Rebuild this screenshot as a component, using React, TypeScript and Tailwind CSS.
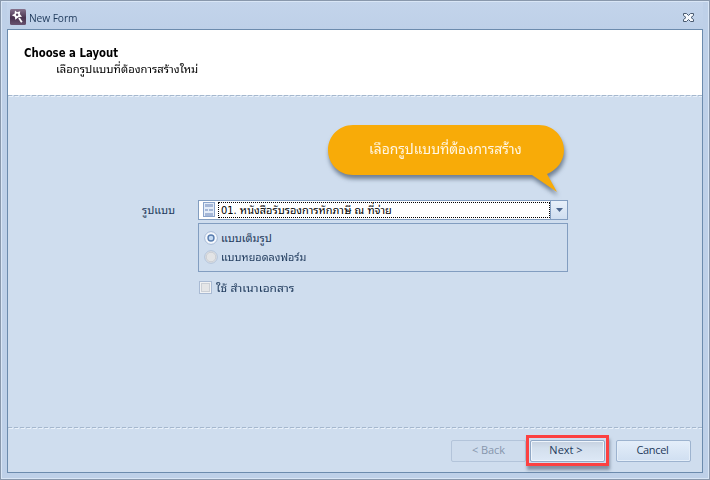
import type { ReactNode } from 'react';

function Label({ children, className = '' }: { children: ReactNode; className?: string }) {
  return <span className={`block w-max origin-left whitespace-nowrap ${className}`}>{children}</span>;
}

function Divider() {
  return (
    <div className="h-[2px] shrink-0">
      <div className="h-px bg-[repeating-linear-gradient(90deg,#a5b7cd_0_4px,#cfddee_4px_6px)]" />
      <div className="h-px bg-[repeating-linear-gradient(90deg,#cfddee_0_1px,#e9f1fa_1px_5px,#cfddee_5px_6px)]" />
    </div>
  );
}

function Radio({ checked = false }: { checked?: boolean }) {
  return (
    <svg width="14" height="14" viewBox="0 0 14 14" className="-mt-[2px] shrink-0 overflow-visible">
      <circle cx="7" cy="7" r="6.3" fill={checked ? '#f8fbff' : '#e3e4e6'} stroke={checked ? '#a5b9d6' : '#b2c3db'} />
      <circle cx="7" cy="7" r="4.8" fill="none" stroke={checked ? '#f4f8fd' : '#c9cdd3'} />
      {checked && <circle cx="7" cy="7" r="3" fill="#c4daf3" stroke="#587cae" strokeWidth="1.4" />}
    </svg>
  );
}

export default function App() {
  return (
    <div className="flex h-[480px] w-[710px] flex-col overflow-hidden border border-[#8998ac] bg-[#bed0e8] font-['Tahoma','DejaVu_Sans_Condensed','Noto_Sans_Thai_Looped','Loma','Waree','Noto_Sans_Thai',sans-serif] text-[11px] text-[#1e395b]">
      <div className="flex flex-1 flex-col border border-[#d9e6f6] px-[5px] pb-[5px]">
        <div className="flex h-[27px] shrink-0 items-center bg-gradient-to-b from-[#c3d4eb] to-[#bed0e8]">
          <svg width="16" height="16" viewBox="0 0 16 16" className="ml-[3px] mt-[3px]">
            <defs>
              <linearGradient id="wand" x2="0" y2="1"><stop stopColor="#86728c" /><stop offset=".55" stopColor="#49334f" /><stop offset="1" stopColor="#695270" /></linearGradient>
            </defs>
            <rect width="16" height="16" rx="1.5" fill="url(#wand)" />
            <path d="M5 1.5 7 3.2 10.2 2.2 9.8 5 12 7.7 9 8 7.2 9.2 5.2 10.7 5 7.7 1.8 6.2 4.6 4.8Z" fill="white" />
            <circle cx="7.1" cy="5.8" r="1.2" fill="#5c4962" />
            <path d="m9 9 2.8 4.3" stroke="white" strokeWidth="1.8" />
          </svg>
          <Label className="ml-[3px] mt-[5px] scale-x-[.93] font-['Open_Sans'] text-[11px] tracking-[-0.1px]">New Form</Label>
          <svg width="13" height="11" viewBox="0 0 13 11" className="ml-auto mr-[8px] mt-[4px]">
            <path d="M1.5 1.5h3l2 2 2-2h3v2l-2.5 2 2.5 2v2h-3l-2-2-2 2h-3v-2l2.5-2-2.5-2Z" fill="#f6f9fd" stroke="#495a70" />
          </svg>
        </div>
        <div className="flex flex-1 flex-col border border-[#6c8bad] bg-[#cfddee]">
          <header className="h-[65px] shrink-0 bg-white pl-[16px] pt-[15px] text-black">
            <Label className="scale-x-[.94] text-[12px] leading-[16px] font-bold">Choose a Layout</Label>
            <Label className="ml-[32px] mt-px scale-x-[1.022] text-[11px] leading-[16px]">เลือกรูปแบบที่ต้องการสร้างใหม่</Label>
          </header>
          <Divider />
          <main className="relative h-[330px] shrink-0 pt-[103px]">
            <div className="flex h-[20px] pl-[134px]">
              <div className="w-[56px] shrink-0"><Label className="leading-[21px]">รูปแบบ</Label></div>
              <div className="flex h-[20px] w-[370px] border border-[#829dc0] bg-white text-black">
                <svg width="12" height="16" viewBox="0 0 12 16" className="ml-[4px] mt-px">
                  <rect x=".5" y=".5" width="11" height="14" fill="#e4edf9" stroke="#8ba4cb" />
                  <path d="M2 2h8v3H2zM2 7h3v2H2zM6 7h4v2H6zM2 11h8v3H2z" fill="#a6b8d8" />
                </svg>
                <div className="ml-[3px] h-[16px] w-[332px] border border-dotted border-black pl-[2px] mt-px">
                  <Label className="leading-[15px]">01. หนังสือรับรองการหักภาษี ณ ที่จ่าย</Label>
                </div>
                <div className="ml-auto flex w-[17px] items-center justify-center border-l border-[#829dc0] bg-gradient-to-b from-[#e8f0fa] to-[#cfdef0]">
                  <svg width="7" height="4" viewBox="0 0 7 4"><path d="M0 0h7L3.5 4Z" fill="#4d678f" /></svg>
                </div>
              </div>
            </div>
            <div className="ml-[190px] mt-[3px] flex h-[49px] w-[370px] flex-col border border-[#829dc0] pl-[5px] pt-[5px]">
              <div className="flex h-[19px] items-center gap-[3px]"><Radio checked /><Label className="mt-px">แบบเต็มรูป</Label></div>
              <div className="flex h-[19px] items-center gap-[3px]"><Radio /><Label className="mt-px scale-x-[.985]">แบบหยอดลงฟอร์ม</Label></div>
            </div>
            <div className="ml-[191px] mt-[8px] flex h-[16px] items-center gap-[4px]">
              <div className="-mt-px h-[13px] w-[13px] border border-[#a9bad3] bg-[#e5e6e8] shadow-[inset_0_0_0_1px_#f1f2f4,inset_0_0_0_2px_#ccd0d6]" />
              <Label className="mt-[2px] scale-x-[1.085]">ใช้ สำเนาเอกสาร</Label>
            </div>
            <div className="absolute left-[320px] top-[28px] h-[70px] w-[237px]">
              <svg width="245" height="78" viewBox="0 0 245 78" className="absolute overflow-visible drop-shadow-[1px_4px_2px_rgba(62,78,100,0.65)]">
                <path d="M25 0H211C225 0 236 11 236 25C236 36 229 45 219 49L229 67L204 50H25C11 50 0 39 0 25C0 11 11 0 25 0Z" fill="#f8ab08" />
              </svg>
              <Label className="relative ml-[41px] scale-x-[.992] pt-[12px] text-[14px] leading-[24px] text-[#fff7e5]">เลือกรูปแบบที่ต้องการสร้าง</Label>
            </div>
          </main>
          <Divider />
          <footer className="flex flex-1 items-start pl-[443px] pt-[11px] font-['Open_Sans'] text-[11px]">
            <button className="h-[22px] w-[75px] rounded-[2px] border border-[#b3c4da] bg-[#cedced] pb-[2px] tracking-[-0.1px] text-[#8696ac]">&lt; Back</button>
            <div className="relative ml-[4px] h-[22px] w-[75px]">
              <div className="absolute -left-[4px] -top-[5px] h-[31px] w-[83px] border-[3px] border-[#fc4141] shadow-[1px_4px_3px_rgba(70,85,106,0.55)]" />
              <button className="relative h-[22px] w-[75px] rounded-[2px] border border-[#91a8c6] bg-gradient-to-b from-[#c5d0df] via-[#d3dfed] via-35% to-[#dde8f6] pb-[2px] pr-[3px] shadow-[inset_0_0_0_1px_#eff5fc]">Next &gt;</button>
            </div>
            <button className="ml-[11px] h-[22px] w-[75px] rounded-[2px] border border-[#9db3cf] bg-gradient-to-b from-[#e4eefa] to-[#d0dff1] pb-[2px] pr-[2px] tracking-[-0.3px] shadow-[inset_0_0_0_1px_#e4eef9]">Cancel</button>
          </footer>
        </div>
      </div>
    </div>
  );
}
